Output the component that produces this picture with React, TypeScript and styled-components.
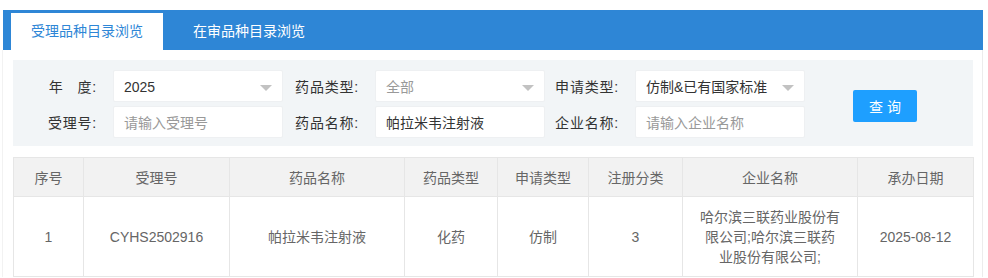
import React from "react";
import styled, { createGlobalStyle } from "styled-components";

const GlobalStyle = createGlobalStyle`
  html, body {
    margin: 0;
    padding: 0;
    background: #ffffff;
    font-family: "Liberation Sans", "Noto Sans CJK SC", sans-serif;
    font-size: 14px;
    color: #333;
  }
`;

const Page = styled.div`
  padding: 10px 5px 0 3px;
`;

const TabBar = styled.div`
  display: flex;
  align-items: flex-end;
  height: 40px;
  padding: 3px 0 0 8px;
  box-sizing: border-box;
  background: #2e86d6;
`;

const Tab = styled.div<{ $active?: boolean }>`
  height: 37px;
  line-height: 37px;
  padding: 0 20px;
  margin-right: 10px;
  font-size: 14px;
  color: ${(p) => (p.$active ? "#2e86d6" : "#ffffff")};
  background: ${(p) => (p.$active ? "#ffffff" : "transparent")};
  cursor: pointer;
`;

const Body = styled.div`
  padding: 10px 9px 0 10px;
  border-left: 1px solid #f2f2f2;
  border-right: 1px solid #ececec;
  margin-left: -1px;
`;

const FilterPanel = styled.div`
  display: flex;
  align-items: center;
  background: #f2f5f7;
  padding: 10px 0 8px 0;
  height: 86px;
  box-sizing: border-box;
`;

const FilterGrid = styled.div`
  display: grid;
  grid-template-columns: 100px 170px 92px 170px 90px 170px;
  row-gap: 4px;
  align-items: center;
`;

const Label = styled.label`
  text-align: right;
  padding-right: 16px;
  color: #333;
  font-size: 14px;
  letter-spacing: 0.8px;
  white-space: pre;
`;

const Field = styled.div<{ $muted?: boolean }>`
  position: relative;
  height: 32px;
  line-height: 32px;
  padding: 0 10px;
  background: #ffffff;
  border: 1px solid #eef0f2;
  border-radius: 2px;
  box-sizing: border-box;
  font-size: 14px;
  color: ${(p) => (p.$muted ? "#999" : "#333")};
  white-space: nowrap;
  overflow: hidden;
`;

const Caret = styled.span`
  position: absolute;
  right: 10px;
  top: 14px;
  width: 0;
  height: 0;
  border-left: 6px solid transparent;
  border-right: 6px solid transparent;
  border-top: 6px solid #c2c2c2;
`;

const QueryButton = styled.button`
  margin-left: 48px;
  margin-top: 4px;
  width: 64px;
  height: 32px;
  padding: 0 0 0 4px;
  border: none;
  border-radius: 2px;
  background: #1e9fff;
  color: #ffffff;
  font-family: inherit;
  font-size: 14px;
  letter-spacing: 4px;
  cursor: pointer;
`;

const Table = styled.table`
  margin-top: 11px;
  width: 960px;
  border-collapse: collapse;
  table-layout: fixed;
  color: #666;
  font-size: 14px;
`;

const HeadCell = styled.th`
  height: 38px;
  padding: 0 15px;
  font-weight: normal;
  text-align: center;
  background: #f2f2f2;
  border: 1px solid #e6e6e6;
  color: #666;
`;

const Cell = styled.td`
  height: 79px;
  padding: 0 16px;
  line-height: 20px;
  text-align: center;
  border: 1px solid #e6e6e6;
  word-break: break-all;
`;

const columns = [
  { title: "序号", width: 70 },
  { title: "受理号", width: 146 },
  { title: "药品名称", width: 175 },
  { title: "药品类型", width: 93 },
  { title: "申请类型", width: 91 },
  { title: "注册分类", width: 94 },
  { title: "企业名称", width: 175 },
  { title: "承办日期", width: 116 },
];

const rows = [
  [
    "1",
    "CYHS2502916",
    "帕拉米韦注射液",
    "化药",
    "仿制",
    "3",
    "哈尔滨三联药业股份有限公司;哈尔滨三联药业股份有限公司;",
    "2025-08-12",
  ],
];

export default function App() {
  return (
    <>
      <GlobalStyle />
      <Page>
        <TabBar>
          <Tab $active>受理品种目录浏览</Tab>
          <Tab>在审品种目录浏览</Tab>
        </TabBar>
        <Body>
          <FilterPanel>
            <FilterGrid>
              <Label>{"年   度:"}</Label>
              <Field>
                2025
                <Caret />
              </Field>
              <Label>药品类型:</Label>
              <Field $muted>
                全部
                <Caret />
              </Field>
              <Label>申请类型:</Label>
              <Field>
                仿制&amp;已有国家标准
                <Caret />
              </Field>
              <Label>受理号:</Label>
              <Field $muted>请输入受理号</Field>
              <Label>药品名称:</Label>
              <Field>帕拉米韦注射液</Field>
              <Label>企业名称:</Label>
              <Field $muted>请输入企业名称</Field>
            </FilterGrid>
            <QueryButton>查询</QueryButton>
          </FilterPanel>
          <Table>
            <colgroup>
              {columns.map((c) => (
                <col key={c.title} style={{ width: c.width }} />
              ))}
            </colgroup>
            <thead>
              <tr>
                {columns.map((c) => (
                  <HeadCell key={c.title}>{c.title}</HeadCell>
                ))}
              </tr>
            </thead>
            <tbody>
              {rows.map((r, i) => (
                <tr key={i}>
                  {r.map((v, j) => (
                    <Cell key={j}>{v}</Cell>
                  ))}
                </tr>
              ))}
            </tbody>
          </Table>
        </Body>
      </Page>
    </>
  );
}
